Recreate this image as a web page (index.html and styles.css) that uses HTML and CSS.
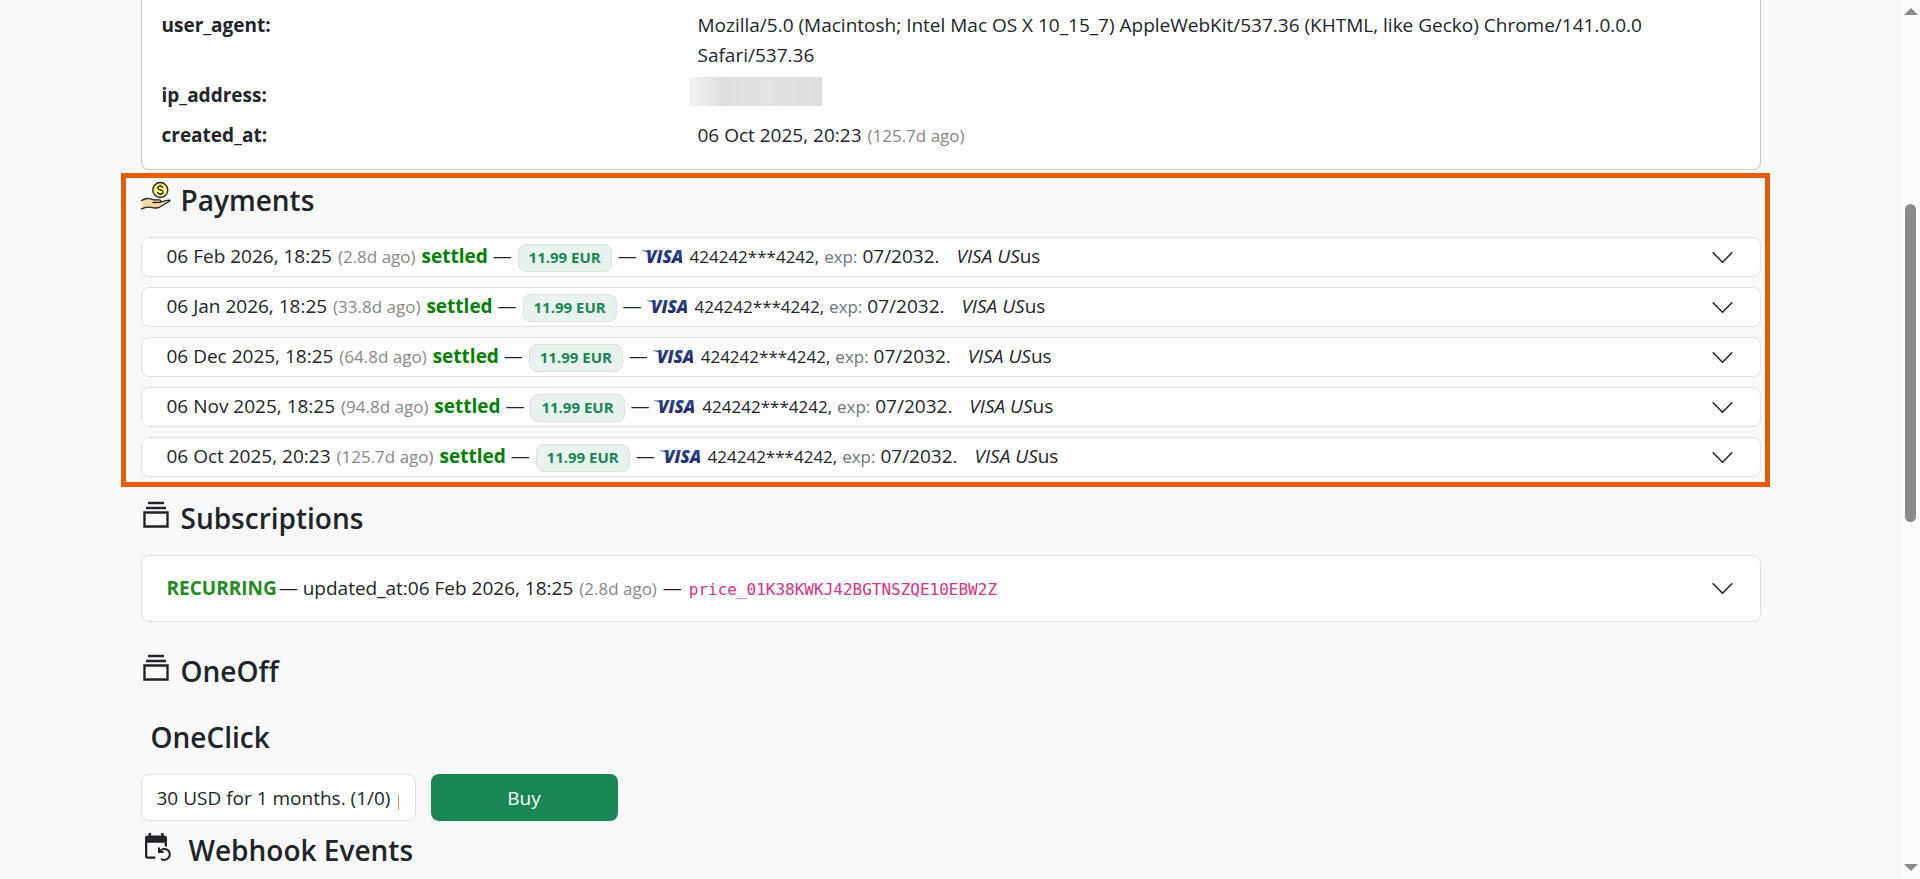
FILE: index.html
```
<!DOCTYPE html>
<html lang="en">
<head>
    <meta charset="UTF-8">
    <meta name="viewport" content="width=device-width, initial-scale=1.0">
    <title>Customer payments</title>
    <link rel="stylesheet" href="styles.css">
</head>
<body>
    <!-- Shared icons -->
    <svg class="sprite" aria-hidden="true">
        <defs>
            <linearGradient id="visa-fill" x1="0" y1="0" x2="0" y2="1">
                <stop offset="0" stop-color="#2a4f9f"/>
                <stop offset="1" stop-color="#1f1f5c"/>
            </linearGradient>
            <symbol id="chevron" viewBox="0 0 16 16">
                <path d="m2 5 6 6 6-6" fill="none" stroke="#212529" stroke-linecap="round" stroke-linejoin="round"/>
            </symbol>
            <symbol id="stack" viewBox="0 0 30 30">
                <path d="M7 4h16M5 9h20M3.5 13.5h23v14h-23z" fill="none" stroke="#212529" stroke-width="2.4"/>
            </symbol>
            <symbol id="visa" viewBox="0 0 40 16">
                <path d="M0 1.400h7.500l1.500 4.400C7 3.600 4 2.200 0 1.900z" fill="#2a4f9f"/>
                <text x="4" y="14" class="visa-text" fill="url(#visa-fill)">VISA</text>
            </symbol>
        </defs>
    </svg>

    <main class="page">
        <div class="container">

            <!-- Customer details -->
            <dl class="card">
                <dt>user_agent:</dt>
                <dd>Mozilla/5.0 (Macintosh; Intel Mac OS X 10_15_7) AppleWebKit/537.36 (KHTML, like Gecko) Chrome/141.0.0.0 Safari/537.36</dd>
                <dt>ip_address:</dt>
                <dd><span class="masked"></span></dd>
                <dt>created_at:</dt>
                <dd>06 Oct 2025, 20:23 <small class="ago">(125.7d ago)</small></dd>
            </dl>

            <!-- Payments -->
            <section class="payments">
                <h2>
                    <svg class="icon" viewBox="0 0 30 30" aria-hidden="true">
                        <circle cx="19.300" cy="9" r="7.500" fill="#fdf07a" stroke="#212529" stroke-width="1.300"/>
                        <path d="M21.800 6.800c-.3-1.200-1.300-1.700-2.500-1.700-1.500 0-2.500.7-2.500 1.900 0 2.700 5.200 1.200 5.200 4 0 1.200-1.100 2-2.600 2s-2.600-.7-2.800-2M19.300 3.800v1.400M19.300 12.900v1.400" fill="none" stroke="#212529" stroke-width="1.300"/>
                        <path d="M.6 19.500c2.500-1.700 5-2.300 7.600-1.900 2.600.3 4.200 1.400 6.500 1.300h3.600c1.800 0 2 2.200.2 2.400l6.300-1.600c1.800-.5 3-.8 4-.5.6.4-.1 1-1.400 1.600l-7.200 4.400c-2.500 1.600-4.500 2.300-7.500 1.600-4.600-1-7.500-1.400-12.100 1.100z" fill="#fcd9a0"/>
                        <path d="M.6 19.500c2.500-1.700 5-2.300 7.600-1.900 2.600.3 4.200 1.400 6.500 1.300h3.600c1.800 0 2 2.200.2 2.400l-6.500.2M18.500 21.300l6.300-1.600c1.800-.5 3-.8 4-.5.6.4-.1 1-1.400 1.600l-7.200 4.400c-2.500 1.600-4.500 2.300-7.500 1.600-4.600-1-7.500-1.400-12.100 1.100" fill="none" stroke="#212529" stroke-width="1.300" stroke-linecap="round" stroke-linejoin="round"/>
                    </svg>
                    Payments
                </h2>
                <div class="payment-list">
                    <button type="button" class="item">
                        <span class="summary">06 Feb 2026, 18:25 <small class="ago">(2.8d ago)</small> <b class="settled">settled</b> — <span class="badge">11.99 EUR</span> — <svg class="visa" role="img" aria-label="Visa"><use href="#visa"/></svg> <small>424242***4242,</small> <small class="exp">exp:</small> 07/2032. <i class="bank">VISA US</i>us</span>
                        <svg class="chevron" aria-hidden="true"><use href="#chevron"/></svg>
                    </button>
                    <button type="button" class="item">
                        <span class="summary">06 Jan 2026, 18:25 <small class="ago">(33.8d ago)</small> <b class="settled">settled</b> — <span class="badge">11.99 EUR</span> — <svg class="visa" role="img" aria-label="Visa"><use href="#visa"/></svg> <small>424242***4242,</small> <small class="exp">exp:</small> 07/2032. <i class="bank">VISA US</i>us</span>
                        <svg class="chevron" aria-hidden="true"><use href="#chevron"/></svg>
                    </button>
                    <button type="button" class="item">
                        <span class="summary">06 Dec 2025, 18:25 <small class="ago">(64.8d ago)</small> <b class="settled">settled</b> — <span class="badge">11.99 EUR</span> — <svg class="visa" role="img" aria-label="Visa"><use href="#visa"/></svg> <small>424242***4242,</small> <small class="exp">exp:</small> 07/2032. <i class="bank">VISA US</i>us</span>
                        <svg class="chevron" aria-hidden="true"><use href="#chevron"/></svg>
                    </button>
                    <button type="button" class="item">
                        <span class="summary">06 Nov 2025, 18:25 <small class="ago">(94.8d ago)</small> <b class="settled">settled</b> — <span class="badge">11.99 EUR</span> — <svg class="visa" role="img" aria-label="Visa"><use href="#visa"/></svg> <small>424242***4242,</small> <small class="exp">exp:</small> 07/2032. <i class="bank">VISA US</i>us</span>
                        <svg class="chevron" aria-hidden="true"><use href="#chevron"/></svg>
                    </button>
                    <button type="button" class="item">
                        <span class="summary">06 Oct 2025, 20:23 <small class="ago">(125.7d ago)</small> <b class="settled">settled</b> — <span class="badge">11.99 EUR</span> — <svg class="visa" role="img" aria-label="Visa"><use href="#visa"/></svg> <small>424242***4242,</small> <small class="exp">exp:</small> 07/2032. <i class="bank">VISA US</i>us</span>
                        <svg class="chevron" aria-hidden="true"><use href="#chevron"/></svg>
                    </button>
                </div>
            </section>

            <!-- Subscriptions -->
            <section class="subscriptions">
                <h2><svg class="icon" aria-hidden="true"><use href="#stack"/></svg> Subscriptions</h2>
                <button type="button" class="item item-large">
                    <span class="summary"><b class="recurring">RECURRING</b>— updated_at:06 Feb 2026, 18:25 <small class="ago">(2.8d ago)</small> — <code>price_01K38KWKJ42BGTNSZQE10EBW2Z</code></span>
                    <svg class="chevron" aria-hidden="true"><use href="#chevron"/></svg>
                </button>
            </section>

            <!-- One-off purchases -->
            <section class="oneoff">
                <h2><svg class="icon" aria-hidden="true"><use href="#stack"/></svg> OneOff</h2>
                <h2 class="oneclick"><label for="price">OneClick</label></h2>
                <form class="buy-form">
                    <select id="price" name="price">
                        <option>30 USD for 1 months. (1/0)</option>
                    </select>
                    <button type="button" class="buy">Buy</button>
                </form>
            </section>

            <!-- Webhooks -->
            <section class="webhooks">
                <h2>
                    <svg class="icon" viewBox="0 0 30 30" aria-hidden="true">
                        <path d="M7.500 2h2.600v2.500h10V2h2.600v2.500h.8c1.600 0 2.500 1 2.500 2.500v8.500h-2.300v-3.800H6.300v13.800h8v2.300H6.500C4.900 27.800 4 26.900 4 25.300V7c0-1.500.9-2.500 2.500-2.500h1z" fill="#212529"/>
                        <path d="M20 27.800a5.500 5.500 0 1 0-1.200-7.600M18 16.600v4.500h4.600" fill="none" stroke="#212529" stroke-width="2"/>
                    </svg>
                    Webhook Events
                </h2>
            </section>
        </div>
    </main>

    <!-- Page scrollbar -->
    <div class="scrollbar" aria-hidden="true">
        <span class="arrow arrow-up"></span>
        <span class="track"><span class="thumb"></span></span>
        <span class="arrow arrow-down"></span>
    </div>
</body>
</html>
```
FILE: styles.css
```
* {
    box-sizing: border-box;
}

body {
    display: flex;
    height: 100vh;
    margin: 0;
    overflow: hidden;
    background: #f8f9fb;
    color: #212529;
    font-family: "Segoe UI", "Open Sans", "Noto Sans", sans-serif;
    font-size: 19px;
    line-height: 30px;
}

button, select {
    font: inherit;
    color: inherit;
}

small {
    font-size: 17px;
}

.sprite {
    position: absolute;
    width: 0;
    height: 0;
}

.page {
    flex: 1;
    overflow: hidden;
}

.container {
    max-width: 1650px;
    margin: 0 auto;
    padding: 0 15px;
}

/* Headings */
h2 {
    display: flex;
    align-items: baseline;
    gap: 10px;
    margin: 0 0 20px;
    font-size: 28px;
    font-weight: 600;
    line-height: 34px;
}

.icon {
    width: 30px;
    height: 30px;
}

/* Customer details */
.card {
    display: grid;
    grid-template-columns: 1fr 2fr;
    gap: 10px 15px;
    margin: 0;
    padding: 10px 20px 18px;
    background: #fff;
    border: 1px solid #ccc;
    border-top: 0;
    border-radius: 0 0 8px 8px;
}

.card dt {
    font-weight: bold;
}

.card dd {
    margin: 0;
}

.masked {
    display: block;
    width: 132px;
    height: 29px;
    margin: -3px 0 0 -8px;
    background: linear-gradient(90deg, #f3f3f3 0%, #eaeaea 12%, #dfdfe0 24%, #e1e2e2 60%, #dcdddf 100%);
}

.ago {
    margin: 0 1px;
    color: #888;
}

/* Payments */
.payments {
    margin: 3px -9px 0 -20px;
    padding: 3px 4px 5px 15px;
    border: 5px solid #e65c00;
}

.payment-list {
    display: flex;
    flex-direction: column;
    gap: 10px;
}

.item {
    display: flex;
    align-items: center;
    justify-content: space-between;
    width: 100%;
    height: 40px;
    padding: 0 25px;
    background: #fff;
    border: 1px solid #dee2e6;
    border-radius: 8px;
    text-align: left;
    white-space: nowrap;
    cursor: pointer;
}

.payment-list .summary {
    padding-bottom: 2px;
}

.item-large {
    height: 67px;
}

.chevron {
    width: 25px;
    height: 25px;
}

.settled {
    color: #008000;
}

.badge {
    display: inline-block;
    margin: 0 1px;
    padding: 5px 10px 6px;
    background: #e8f3ed;
    border: 1px solid #dee2e6;
    border-radius: 8px;
    color: #198754;
    font-size: 15px;
    font-weight: bold;
    line-height: 15px;
}

.visa {
    width: 40px;
    height: 16px;
    margin-right: 3px;
    vertical-align: -2px;
}

.visa-text {
    font-size: 17px;
    font-style: italic;
    font-weight: 800;
}

.exp {
    color: #6c757d;
}

.bank {
    margin-left: 12px;
}

/* Subscriptions */
.subscriptions {
    margin-top: 12px;
}

.recurring {
    margin-right: 2px;
    color: #228b22;
}

code {
    margin-left: 2px;
    color: #d63384;
    font-family: Consolas, "DejaVu Sans Mono", monospace;
    font-size: 16px;
}

/* One-off purchases */
.oneoff {
    margin-top: 30px;
}

.oneclick {
    margin-top: 32px;
    padding-left: 10px;
}

.buy-form {
    display: flex;
    gap: 15px;
}

.buy-form select {
    width: 275px;
    height: 47px;
    padding: 0 15px;
    appearance: none;
    background: linear-gradient(#e0a05c, #e0a05c) right 16px top 20px / 1px 15px no-repeat #fff;
    border: 1px solid #dee2e6;
    border-radius: 8px;
}

.buy {
    width: 187px;
    height: 47px;
    background: #198754;
    border: 0;
    border-radius: 8px;
    color: #fff;
    cursor: pointer;
}

/* Webhooks */
.webhooks {
    margin-top: 10px;
}

.webhooks h2 {
    gap: 18px;
}

/* Scrollbar */
.scrollbar {
    display: flex;
    flex-direction: column;
    align-items: center;
    width: 19px;
    padding: 8px 0;
    background: #fcfcfc;
}

.arrow {
    border: 0 solid transparent;
    border-width: 0 7px;
}

.arrow-up {
    border-bottom: 7px solid #8b8b8b;
}

.arrow-down {
    border-top: 7px solid #8b8b8b;
}

.track {
    flex: 1;
    padding-top: 189px;
}

.thumb {
    display: block;
    width: 11px;
    height: 318px;
    background: #8b8b8b;
    border-radius: 6px;
}
```
